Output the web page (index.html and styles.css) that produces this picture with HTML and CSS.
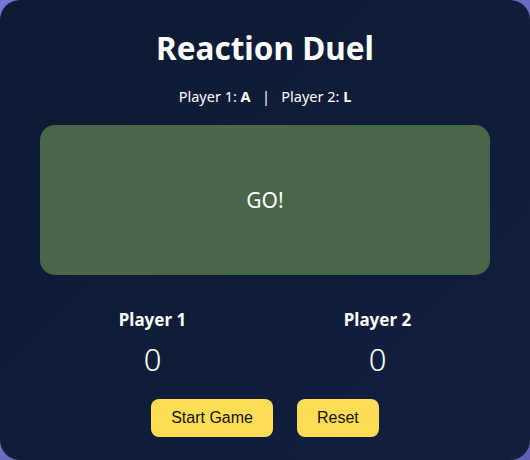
FILE: index.html
```html
<!DOCTYPE html>
<html lang="en">

<head>
    <meta charset="UTF-8" />
    <meta name="viewport" content="width=device-width, initial-scale=1.0" />
    <title>Reaction Duel</title>
    <link rel="stylesheet" href="styles.css">
</head>

<body>
    <div class="game">
        <h1 class="title">Reaction Duel</h1>
        <p class="keys">Player 1: <b>A</b> &nbsp; | &nbsp; Player 2: <b>L</b></p>
        <div class="signal" data-signal>GO!</div>
        <div class="scores">
            <div class="score">
                <div class="score-name">Player 1</div>
                <div class="score-value" data-score1>0</div>
            </div>
            <div class="score">
                <div class="score-name">Player 2</div>
                <div class="score-value" data-score2>0</div>
            </div>
        </div>
        <div class="controls">
            <button data-start>Start Game</button>
            <button data-reset>Reset</button>
        </div>
    </div>
</body>

</html>
```

FILE: styles.css
```css
* {
    margin: 0;
    padding: 0;
    box-sizing: border-box;
}

body {
    font-family: 'Noto Sans', 'Open Sans', sans-serif;
    background: linear-gradient(135deg, #7079d8, #6260b4);
    height: 100vh;
    overflow: hidden;
}

.game {
    width: 530px;
    height: 460px;
    padding: 26px 40px 0;
    border-radius: 20px;
    background: linear-gradient(135deg, #0e1a33, #111f3e);
    color: #fff;
    text-align: center;
}

.title {
    font-size: 31.5px;
    font-weight: bold;
    line-height: 44px;
}

.keys {
    margin-top: 16px;
    font-size: 14.5px;
    line-height: 20px;
}

.signal {
    margin-top: 19px;
    height: 150px;
    border-radius: 15px;
    background-color: #4a6649;
    display: flex;
    align-items: center;
    justify-content: center;
    font-size: 21px;
}

.scores {
    display: flex;
    justify-content: space-around;
    margin-top: 34px;
}

.score-name {
    font-size: 17px;
    font-weight: bold;
    line-height: 22px;
}

.score-value {
    margin-top: 8px;
    font-size: 31px;
    font-weight: 300;
    line-height: 40px;
}

.controls {
    display: flex;
    justify-content: center;
    gap: 24px;
    margin-top: 20px;
}

button {
    font-family: 'Liberation Sans', Arial, sans-serif;
    font-size: 16px;
    color: #111;
    background-color: #ffdd57;
    border: none;
    border-radius: 8px;
    padding: 10px 20px;
    line-height: 18px;
    cursor: pointer;
}
```
